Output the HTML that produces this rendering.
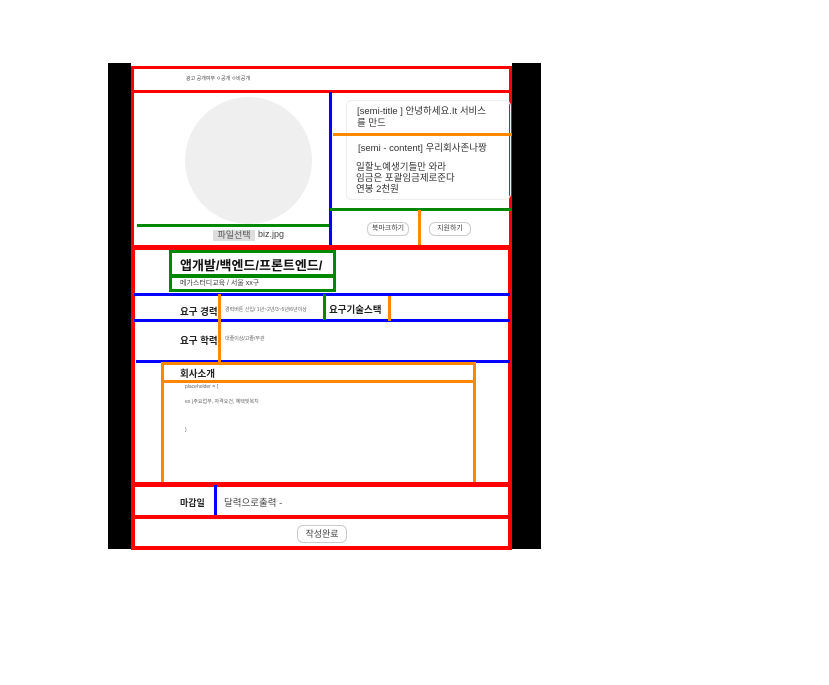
<!DOCTYPE html>
<html><head><meta charset="utf-8"><style>
body{margin:0;width:829px;height:685px;background:#fff;position:relative;overflow:hidden;font-family:"Liberation Sans","Noto Sans CJK KR",sans-serif;color:#222}
div{position:absolute;box-sizing:border-box}
.t{white-space:nowrap}
.btn{border:1px solid #ccc;border-radius:6px;background:#fff;font-size:7px;text-align:center;color:#444}
</style></head><body>
<div style="left:108px;top:63px;width:433px;height:486px;background:#000"></div>
<div style="left:131px;top:63px;width:381px;height:486px;background:#fff"></div>
<div style="left:131px;top:66px;width:381px;height:27px;border:3px solid #f00"></div>
<div class="t" style="left:186px;top:75px;font-size:5px;color:#444">광고 공개여부 ㅇ공개 ㅇ비공개</div>
<div style="left:131px;top:92px;width:381px;height:158px;border:3px solid #f00;border-top:0"></div>
<div style="left:185px;top:97px;width:127px;height:127px;border-radius:50%;background:#efefef"></div>
<div style="left:137px;top:224px;width:193px;height:3px;background:#080"></div>
<div style="left:329px;top:92px;width:3px;height:156px;background:#00f"></div>
<div class="t" style="left:213px;top:230px;width:42px;height:11px;background:#ddd;font-size:9px;line-height:11px;text-align:center;color:#555">파일선택</div>
<div class="t" style="left:258px;top:229px;font-size:9px;color:#444">biz.jpg</div>
<div style="left:346px;top:100px;width:165px;height:100px;border:1px solid #eee;border-radius:6px"></div>
<div class="t" style="left:357px;top:106px;font-size:9.5px;line-height:12px;color:#333">[semi-title ] 안녕하세요.It 서비스<br>를 만드</div>
<div style="left:333px;top:133px;width:179px;height:3px;background:#f80"></div>
<div class="t" style="left:358px;top:140px;font-size:9.5px;color:#333">[semi - content] 우리회사존나짱</div>
<div class="t" style="left:356px;top:162px;font-size:9.5px;line-height:11px;color:#333">일할노예생기들만 와라<br>임금은 포괄임금제로준다<br>연봉 2천원</div>
<div style="left:330px;top:208px;width:182px;height:3px;background:#080"></div>
<div style="left:418px;top:210px;width:3px;height:38px;background:#f80"></div>
<div class="btn" style="left:367px;top:222px;width:42px;height:14px;line-height:12px">북마크하기</div>
<div class="btn" style="left:429px;top:222px;width:42px;height:14px;line-height:12px">지원하기</div>
<div style="left:131px;top:245px;width:381px;height:5px;background:#f00"></div>
<div style="left:131px;top:248px;width:4px;height:300px;background:#f00"></div>
<div style="left:508px;top:248px;width:4px;height:300px;background:#f00"></div>
<div style="left:169px;top:250px;width:167px;height:27px;border:3px solid #080"></div>
<div class="t" style="left:180px;top:255px;font-size:13px;font-weight:bold;color:#111">앱개발/백엔드/프론트엔드/</div>
<div style="left:169px;top:275px;width:167px;height:17px;border:3px solid #080"></div>
<div class="t" style="left:180px;top:278px;font-size:7px;color:#444">메가스터디교육 / 서울 xx구</div>
<div style="left:134px;top:293px;width:376px;height:3px;background:#00f"></div>
<div style="left:134px;top:319px;width:376px;height:3px;background:#00f"></div>
<div style="left:136px;top:360px;width:374px;height:3px;background:#00f"></div>
<div style="left:218px;top:294px;width:3px;height:68px;background:#f80"></div>
<div style="left:323px;top:294px;width:3px;height:26px;background:#080"></div>
<div style="left:388px;top:296px;width:3px;height:25px;background:#f80"></div>
<div class="t" style="left:180px;top:304px;font-size:9.5px;font-weight:bold">요구 경력</div>
<div class="t" style="left:225px;top:306px;font-size:5px;color:#666">경력버튼 신입/ 1년~2년/3~5년/6년이상</div>
<div class="t" style="left:329px;top:302px;font-size:9.5px;font-weight:bold">요구기술스택</div>
<div class="t" style="left:180px;top:333px;font-size:9.5px;font-weight:bold">요구 학력</div>
<div class="t" style="left:225px;top:335px;font-size:5px;color:#666">대졸이상/고졸/무관</div>
<div style="left:161px;top:362px;width:315px;height:123px;border:3px solid #f80"></div>
<div style="left:163px;top:380px;width:311px;height:3px;background:#f80"></div>
<div class="t" style="left:180px;top:366px;font-size:9.5px;font-weight:bold">회사소개</div>
<div class="t" style="left:185px;top:384px;font-size:5px;color:#666">placeholder = {</div>
<div class="t" style="left:185px;top:398px;font-size:5px;color:#666">ex )주요업무, 자격요건, 혜택및복지</div>
<div class="t" style="left:185px;top:427px;font-size:5px;color:#666">}</div>
<div style="left:131px;top:482px;width:381px;height:5px;background:#f00"></div>
<div style="left:214px;top:485px;width:3px;height:32px;background:#00f"></div>
<div class="t" style="left:180px;top:496px;font-size:9px;font-weight:bold">마감일</div>
<div class="t" style="left:224px;top:495px;font-size:9.5px;color:#444">달력으로출력 -</div>
<div style="left:131px;top:515px;width:381px;height:4px;background:#f00"></div>
<div class="btn" style="left:297px;top:525px;width:50px;height:18px;line-height:16px;font-size:9px">작성완료</div>
<div style="left:131px;top:546px;width:381px;height:4px;background:#f00"></div>
</body></html>
